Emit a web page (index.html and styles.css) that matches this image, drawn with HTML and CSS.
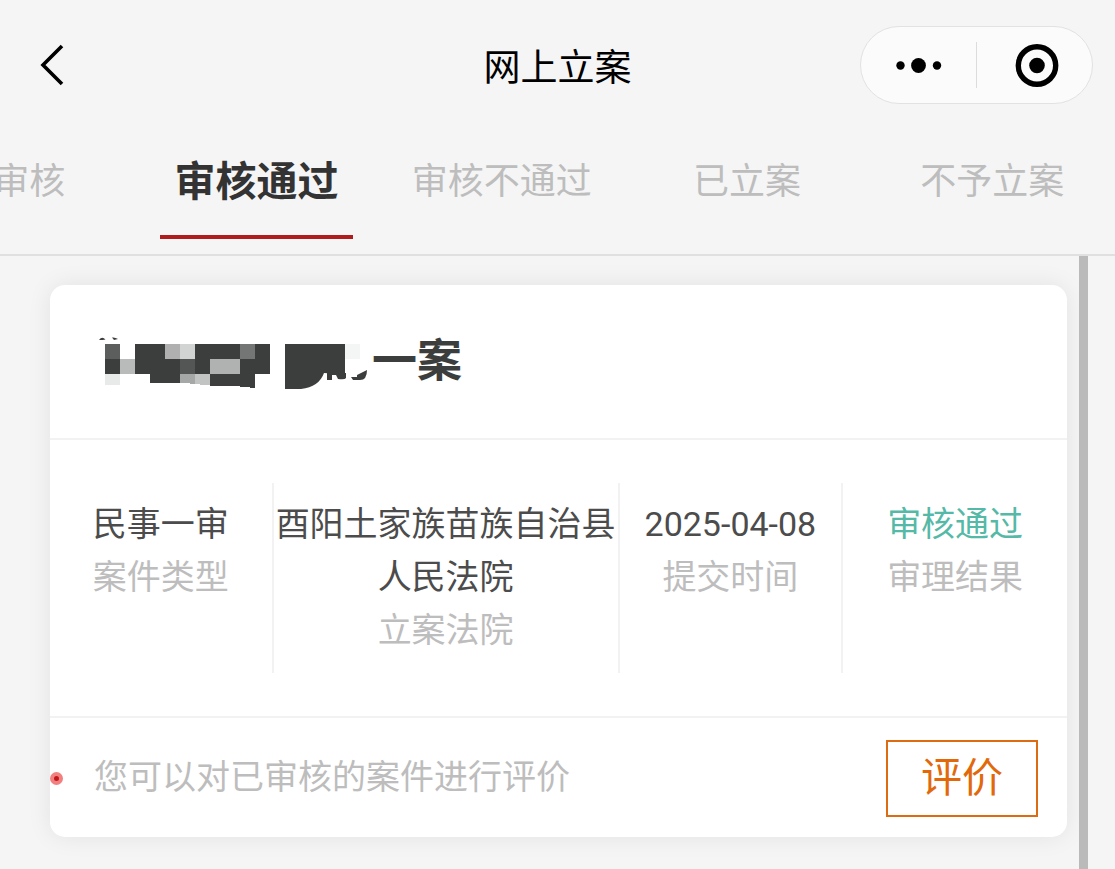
FILE: index.html
```html
<!DOCTYPE html>
<html lang="zh-Hans">
<head>
<meta charset="UTF-8">
<meta name="viewport" content="width=device-width, initial-scale=1">
<title>网上立案</title>
<link rel="stylesheet" href="styles.css">
</head>
<body>
<header class="navbar">
    <button class="back" type="button" aria-label="返回">
        <svg width="26" height="44" viewBox="0 0 26 44"><path d="M24 3 L5 22 L24 41" fill="none" stroke="#000" stroke-width="3.6"/></svg>
    </button>
    <h1>网上立案</h1>
    <div class="capsule">
        <button type="button" aria-label="更多">
            <svg width="46" height="16" viewBox="0 0 46 16"><circle cx="4.5" cy="8.500" r="4.2"/><circle cx="22.500" cy="8.500" r="7.4"/><circle cx="41" cy="8.500" r="4.2"/></svg>
        </button>
        <button type="button" aria-label="关闭">
            <svg width="48" height="44" viewBox="0 0 48 44"><circle cx="26" cy="22.500" r="18.7" fill="none" stroke="#000" stroke-width="5.4"/><circle cx="26" cy="22.500" r="7.8"/></svg>
        </button>
    </div>
</header>

<nav class="tabs">
    <a href="#" class="tab">待审核</a>
    <a href="#" class="tab active">审核通过</a>
    <a href="#" class="tab">审核不通过</a>
    <a href="#" class="tab">已立案</a>
    <a href="#" class="tab">不予立案</a>
</nav>

<main class="content">
    <div class="list">
        <article class="card">
            <h2 class="card-title">
                <!-- 当事人姓名打码 -->
                <svg class="mosaic" width="277" height="58" viewBox="0 -2 277 58" shape-rendering="crispEdges">
                    <g fill="#3c3e3d">
                        <path d="M40 9H175V39H160V53L145 51.5L115 50.5L85 47.5H55V39H40Z"/>
                        <path d="M10 24H25V39H10Z"/>
                    </g>
                    <path d="M10 9H25V24H10Z" fill="#5c5e5d"/>
                    <path d="M25 24H40V39H25Z" fill="#b9bbba"/>
                    <path d="M10 39H25V50H10Z" fill="#e8eaea"/>
                    <path d="M70 9H85V24H70Z" fill="#b0b0b0"/>
                    <path d="M85 9H100V24H85Z" fill="#d2d4d3"/>
                    <path d="M145 9H160V24H145Z" fill="#747675"/>
                    <path d="M85 24H100V39H85Z" fill="#545655"/>
                    <path d="M115 24H145V39H115Z" fill="#b0b2b1"/>
                    <path d="M85 39H100V49L85 47.5Z" fill="#a6a8a7"/>
                    <path d="M100 39H115V50.5L100 49Z" fill="#c2c4c3"/>
                    <path d="M250 9H265V24H250Z" fill="#f4f5f5"/>
                    <g fill="#3c3e3d" shape-rendering="auto">
                        <path d="M4 5Q7 1 10.500 4.500Q8 5 4 5ZM17 2.500Q20 2 23 4L19 5Z"/>
                        <path d="M190 9H250V39Q240 39 229 38Q224 52 206 54H190Z"/>
                        <path d="M232 38H237V45H232ZM247 40H251V43Q250 45 243 44L241 40ZM254 40H262L272 35Q272 45 265 45H258L256 42H262V40ZM237 38H251V40H237Z"/>
                    </g>
                </svg>
                <span>一案</span>
            </h2>
            <dl class="info">
                <div class="cell">
                    <dd>民事一审</dd>
                    <dt>案件类型</dt>
                </div>
                <div class="cell">
                    <dd>酉阳土家族苗族自治县人民法院</dd>
                    <dt>立案法院</dt>
                </div>
                <div class="cell">
                    <dd>2025-04-08</dd>
                    <dt>提交时间</dt>
                </div>
                <div class="cell">
                    <dd class="pass">审核通过</dd>
                    <dt>审理结果</dt>
                </div>
            </dl>
            <div class="card-footer">
                <span class="dot"></span>
                <p>您可以对已审核的案件进行评价</p>
                <button class="rate" type="button">评价</button>
            </div>
        </article>
    </div>
    <div class="scrollbar"></div>
</main>
</body>
</html>
```
FILE: styles.css
```css
* {
  box-sizing: border-box;
}

body {
  margin: 0;
  min-height: 100vh;
  display: flex;
  flex-direction: column;
  background-color: #f5f5f5;
  color: #4c4c4c;
  font-family: Roboto, "Noto Sans CJK SC", sans-serif;
  font-size: 34px;
  overflow-x: hidden;
}

h1, h2, p, dl, dd {
  margin: 0;
}

button {
  padding: 0;
  border: none;
  background: none;
  font-family: inherit;
  cursor: pointer;
}

svg {
  display: block;
}

/* 顶部导航 */
.navbar {
  display: grid;
  grid-template-columns: 1fr auto 1fr;
  align-items: center;
  height: 130px;
  padding: 0 22px 0 38px;
}

.navbar h1 {
  padding-right: 16px;
  color: #000;
  font-size: 37px;
  font-weight: 400;
}

.back {
  justify-self: start;
}

.capsule {
  justify-self: end;
  display: flex;
  align-items: center;
  width: 233px;
  height: 78px;
  border: 1px solid #e2e2e2;
  border-radius: 39px;
  background-color: #fbfbfb;
}

.capsule button {
  flex: 1;
  height: 46px;
  display: flex;
  align-items: center;
  justify-content: center;
}

.capsule button + button {
  border-left: 1px solid #dcdcdc;
}

/* 状态标签 */
.tabs {
  display: flex;
  height: 126px;
  padding-bottom: 15px;
  border-bottom: 2px solid #e0e0e0;
  overflow: hidden;
}

.tab {
  flex: 0 0 22%;
  display: flex;
  align-items: center;
  justify-content: center;
  padding-bottom: 14px;
  color: #bdbdbd;
  font-size: 36px;
  text-decoration: none;
  white-space: nowrap;
}

.tab:first-child {
  margin-left: -10%;
}

.tab.active {
  position: relative;
  color: #333;
  font-size: 41px;
  font-weight: 700;
}

.tab.active::after {
  content: "";
  position: absolute;
  left: 26px;
  right: 26px;
  bottom: 0;
  height: 4px;
  background-color: #b01c1c;
}

/* 案件列表 */
.content {
  flex: 1;
  display: flex;
  padding-right: 27px;
}

.list {
  flex: 1;
  padding: 29px 12px 32px 50px;
}

.scrollbar {
  width: 9px;
  background-color: #bababa;
}

.card {
  border-radius: 15px;
  background-color: #fff;
  box-shadow: 0 0 24px rgba(0, 0, 0, 0.08);
}

.card-title {
  display: flex;
  align-items: center;
  height: 155px;
  padding-left: 45px;
  border-bottom: 2px solid #f2f2f2;
  color: #3c3e3d;
  font-size: 45px;
  font-weight: 700;
}

.card-title span {
  padding-bottom: 8px;
}

.info {
  display: grid;
  grid-template-columns: 22fr 34fr 22fr 22fr;
  padding: 43px 0;
  border-bottom: 2px solid #f2f2f2;
  line-height: 53px;
  text-align: center;
}

.cell {
  display: flex;
  flex-direction: column;
  padding: 15px 0 16px;
  border-right: 2px solid #f2f2f2;
}

.cell:last-child {
  border-right: none;
}

.cell dt {
  color: #bdbdbd;
}

.cell .pass {
  color: #55b9a7;
}

.card-footer {
  display: flex;
  align-items: center;
  height: 119px;
  padding: 1px 29px 0 0;
}

.card-footer p {
  flex: 1;
  margin-left: 31px;
  padding-bottom: 8px;
  color: #bdbdbd;
}

.dot {
  width: 13px;
  height: 13px;
  border: 4px solid #f28080;
  border-radius: 50%;
  background-color: #c01818;
}

.rate {
  width: 152px;
  height: 77px;
  padding-bottom: 8px;
  border: 2px solid #dc6b12;
  color: #e2690b;
  font-size: 41px;
}
```
